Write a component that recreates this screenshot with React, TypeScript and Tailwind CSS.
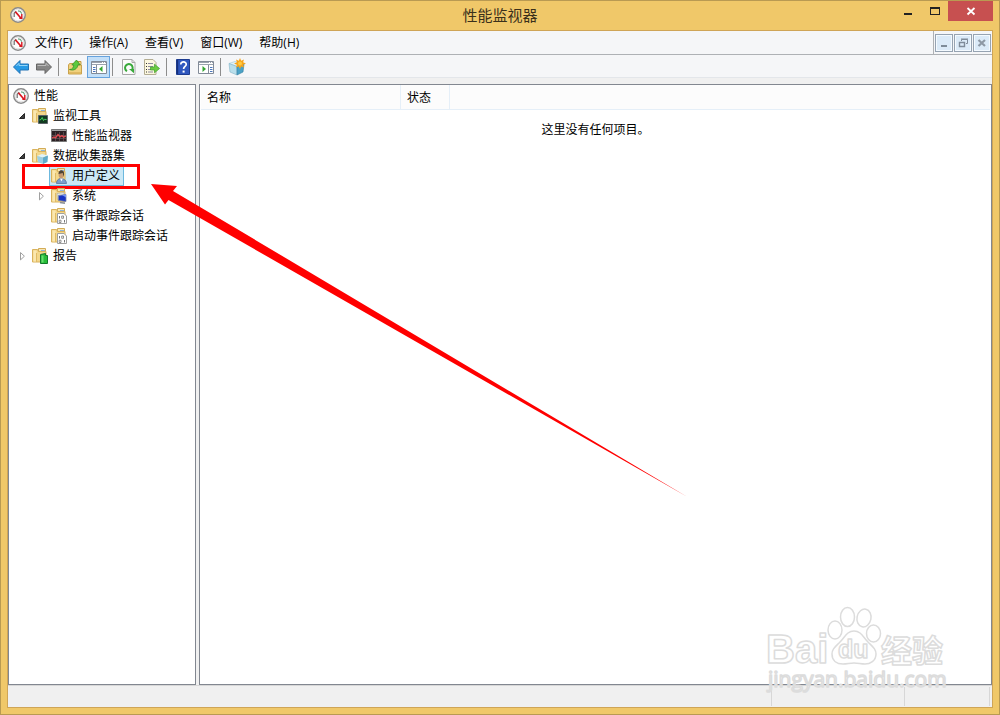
import React from "react";
import clsx from "clsx";

const GaugeIcon = () => (
  <svg width="16" height="16" viewBox="0 0 16 16" className="shrink-0">
    <circle cx="8" cy="8" r="7.2" fill="#fdfdfd" stroke="#8a8a8a" strokeWidth="1.5" />
    <circle cx="8" cy="8" r="5.9" fill="none" stroke="#d8d8d8" strokeWidth="0.8" />
    <path d="M4.2 10V6.2L6 4.2" fill="none" stroke="#777" strokeWidth="1.3" />
    <path d="M8 3.8l2.4 0.6 1.4 2.4" fill="none" stroke="#6aa584" strokeWidth="1.2" />
    <path d="M5.4 4.8l5.4 6.2" stroke="#d9141e" strokeWidth="1.7" />
    <path d="M11.8 7v4.2H9.4" fill="none" stroke="#d9141e" strokeWidth="1.4" />
  </svg>
);

const FolderIcon = ({ children }: { children?: React.ReactNode }) => (
  <svg width="16" height="16" viewBox="0 0 16 16" className="shrink-0">
    <path d="M6.5 0.5h7v4h-7z" fill="#f7e6b4" stroke="#d3ac56" />
    <path d="M9 2.5h4" stroke="#8fb4d8" />
    <path d="M0.5 1.5h5l1 2h7.5v10.5H0.5z" fill="#f3d78b" stroke="#d9b25c" />
    <path d="M1.5 2.5h3v11h-3z" fill="#fae7b0" />
    <path d="M4.5 5v9" stroke="#e0bb64" />
    {children}
  </svg>
);

const MonitorFolderIcon = () => (
  <FolderIcon>
    <path d="M6.5 7.5h9v8h-9z" fill="#123a20" stroke="#5d6468" />
    <path d="M7.500 12l1.500-0.500 1.200-2 1.300 3 1-1.200 2 0.200" fill="none" stroke="#46d65a" />
  </FolderIcon>
);

const CubeFolderIcon = () => (
  <FolderIcon>
    <path d="M5 8l5-2 6 1.5-5 2z" fill="#dff3fa" />
    <path d="M5 8l6 1.5v6.5l-5-2z" fill="#9bcfe4" />
    <path d="M11 9.500l5-2-0.500 6.500-4.500 2z" fill="#5fabcb" />
  </FolderIcon>
);

const UserFolderIcon = () => (
  <FolderIcon>
    <path d="M5.5 15.5c0-3 1.5-5 4.5-5s5.500 2 5.500 5z" fill="#7c9fcc" stroke="#4d6c98" strokeWidth="0.7" />
    <path d="M9 10.5l1.5 3 1.3-3z" fill="#fff" />
    <ellipse cx="10.2" cy="6.4" rx="2.6" ry="3.8" fill="#c79a70" />
    <path d="M7.5 6c0-5 5.8-5 5.6 0l-0.6 3-0.700-4z" fill="#4d4336" />
  </FolderIcon>
);

const SystemFolderIcon = () => (
  <FolderIcon>
    <path d="M6 5.5l7-1 0.5 8-7-1z" fill="#e7e7df" stroke="#a4a49c" strokeWidth="0.6" />
    <path d="M7.5 7.5l7.5-1v7l-7.5-1z" fill="#1733c4" stroke="#7582aa" strokeWidth="0.8" />
    <path d="M11 7l4-0.5v3z" fill="#7294f5" />
    <path d="M9 14.5l5 0.8" stroke="#8a8f97" strokeWidth="1.4" />
  </FolderIcon>
);

const TraceFolderIcon = () => (
  <FolderIcon>
    <path d="M6.5 5.5h6.500l2.500 2.500v7.500h-9z" fill="#fff" stroke="#a0a0a0" />
    <path d="M8.5 8v2.5M13.5 12v2.5" stroke="#777" />
    <path d="M10.7 8h1.800v2.300h-1.800zM8.200 12.200H10v2.300H8.200z" fill="none" stroke="#777" strokeWidth="0.8" />
  </FolderIcon>
);

const ReportFolderIcon = () => (
  <FolderIcon>
    <path d="M8.5 6.5l5-1v2h2v8h-7z" fill="#27bd38" stroke="#13792a" />
    <path d="M9.5 7.5h2v7h-2z" fill="#69df70" />
  </FolderIcon>
);

const ChartIcon = () => (
  <svg width="16" height="16" viewBox="0 0 16 16" className="shrink-0">
    <path d="M0.5 1.5h15v12h-15z" fill="#2b2124" stroke="#777" />
    <path d="M1 2.5h14" stroke="#a5a5a5" />
    <path d="M1 7.5h14M1 10.5h14M4.5 4v9M8.5 4v9M12.5 4v9" stroke="#6a585b" strokeWidth="0.7" />
    <path d="M1 10l2-1 1.5 0.8L7 6.500l2 2.300 2-1.200 1.500 1.600L15 8" fill="none" stroke="#e34a50" strokeWidth="1.3" />
  </svg>
);

const ArrowIcon = ({ forward = false }: { forward?: boolean }) => (
  <svg width="16" height="16" viewBox="0 0 16 16">
    {forward ? (
      <g>
        <path d="M15.5 8L9 1.5v3.500H0.500v6H9v3.500z" fill="#858585" stroke="#666" />
        <path d="M1.5 6.5H10V4.300l2.600 2.700" fill="none" stroke="#bcbcbc" />
      </g>
    ) : (
      <g>
        <path d="M0.5 8L7 1.500v3.500h8.500v6H7v3.500z" fill="#279ae5" stroke="#2373b4" />
        <path d="M14.5 6.5H6V4.300L3.400 7" fill="none" stroke="#92d5f8" />
      </g>
    )}
  </svg>
);

const UpFolderIcon = () => (
  <svg width="16" height="16" viewBox="0 0 16 16">
    <path d="M8.5 2.5h5.500v3H8.500z" fill="#f3d98d" stroke="#c49c45" />
    <path d="M1.5 6l1-1.500h4L8 6h6.500v9h-13z" fill="#f0d17e" stroke="#c9a24c" />
    <path d="M2 14h12" stroke="#dcb45c" strokeWidth="1.6" />
    <path
      d="M2.500 10.500c3 0 4-2 4.200-4.500H4.800L9.500 1l3.700 4.800H11c-0.600 4-4 6.400-8.500 4.700z"
      fill="#5cc93e"
      stroke="#2d8b23"
      strokeWidth="0.7"
    />
  </svg>
);

const PaneIcon = ({ mirrored = false }: { mirrored?: boolean }) => (
  <svg width="16" height="16" viewBox="0 0 16 16">
    <path d="M0.5 2.5h15v12h-15z" fill="#fff" stroke="#828b98" />
    <path d="M1 3.5h14M1 5.5h14" stroke="#9ba3af" />
    <path d="M11 3.5h1M13 3.5h1" stroke="#fff" />
    {mirrored ? (
      <g>
        <path d="M10.5 6v8" stroke="#828b98" />
        <path d="M12 8.5h2.500M12 10.500h2.500M12 12.500h2.500" stroke="#4b76bd" />
        <path d="M4.5 7v6L8 10z" fill="#35a632" />
      </g>
    ) : (
      <g>
        <path d="M5.5 6v8" stroke="#828b98" />
        <path d="M2 8.5h2.500M2 10.500h2.500M2 12.500h2.500" stroke="#4b76bd" />
        <path d="M11.5 7v6L8 10z" fill="#35a632" />
      </g>
    )}
  </svg>
);

const RefreshIcon = () => (
  <svg width="16" height="16" viewBox="0 0 16 16">
    <path d="M1.5 0.5h9.500l3 3v12h-12.500z" fill="#fbfbfb" stroke="#a8a8a8" />
    <path d="M11 0.5v3h3" fill="none" stroke="#a8a8a8" />
    <path d="M6 12.2A3.800 3.800 0 1 1 11 11" fill="none" stroke="#39a93b" strokeWidth="2" />
    <path d="M8 10h5v4.200z" fill="#39a93b" />
  </svg>
);

const ExportIcon = () => (
  <svg width="16" height="16" viewBox="0 0 16 16">
    <path d="M0.5 0.5h8.500l3 3v12H0.500z" fill="#fdf8df" stroke="#b3ad92" />
    <path d="M2 4.5h1M2 7.5h1M2 10.5h1M2 13h1" stroke="#333" />
    <path d="M4 4.5h5M4 7.5h5M4 10.5h3M4 13h5" stroke="#8d8aa0" />
    <path d="M6.5 8h4V5.200L15.600 9.500l-5.100 4.300V11h-4z" fill="#6dcc42" stroke="#3fa02e" strokeWidth="0.7" />
  </svg>
);

const HelpIcon = () => (
  <svg width="16" height="16" viewBox="0 0 16 16">
    <path d="M1.5 0.5h13v15h-13z" fill="#2f57bf" stroke="#1d3c90" />
    <path d="M2.5 1v14" stroke="#16307c" strokeWidth="1.4" />
    <path d="M5.8 5.400c0-3.400 5.600-3.200 5.400 0 0 2-2.600 2.200-2.600 4.600" fill="none" stroke="#fff" strokeWidth="1.7" />
    <path d="M7.6 11.6h2v2h-2z" fill="#fff" />
  </svg>
);

const NewSetIcon = () => (
  <svg width="18" height="18" viewBox="0 0 18 18">
    <path d="M1 5.5l6-2 8 2.500-6 2.500z" fill="#e2f2f8" stroke="#9ec4d4" strokeWidth="0.6" />
    <path d="M1 5.5l8 3v8.500l-7-3z" fill="#b8deeb" stroke="#83b3c8" strokeWidth="0.6" />
    <path d="M9 8.5L16 6l-1 8-6 3z" fill="#4ba2c6" stroke="#337e9f" strokeWidth="0.6" />
    <path
      d="M12 0l1.200 2.700L16 1.400l-0.900 2.900 2.900 1.200-2.900 1.200L16 9.600l-2.800-1.200L12 11l-1.200-2.600L8 9.600l0.900-2.900L6 5.500l2.900-1.200L8 1.400l2.800 1.300z"
      fill="#f7a51b"
    />
    <circle cx="12" cy="5.5" r="2" fill="#ffca42" />
  </svg>
);

const menus = ["文件(F)", "操作(A)", "查看(V)", "窗口(W)", "帮助(H)"];

interface Tool {
  label: string;
  icon: React.ReactNode;
  pressed?: boolean;
}

const toolGroups: Tool[][] = [
  [
    { label: "后退", icon: <ArrowIcon /> },
    { label: "前进", icon: <ArrowIcon forward /> },
  ],
  [
    { label: "上移一级", icon: <UpFolderIcon /> },
    { label: "显示/隐藏控制台树", icon: <PaneIcon />, pressed: true },
  ],
  [
    { label: "刷新", icon: <RefreshIcon /> },
    { label: "导出列表", icon: <ExportIcon /> },
  ],
  [
    { label: "帮助", icon: <HelpIcon /> },
    { label: "显示/隐藏操作窗格", icon: <PaneIcon mirrored /> },
  ],
  [{ label: "新建数据收集器集", icon: <NewSetIcon /> }],
];

interface TreeNode {
  label: string;
  level: 0 | 1 | 2;
  icon: React.ReactNode;
  state?: "open" | "closed";
  selected?: boolean;
}

const nodes: TreeNode[] = [
  { label: "性能", level: 0, icon: <GaugeIcon /> },
  { label: "监视工具", level: 1, icon: <MonitorFolderIcon />, state: "open" },
  { label: "性能监视器", level: 2, icon: <ChartIcon /> },
  { label: "数据收集器集", level: 1, icon: <CubeFolderIcon />, state: "open" },
  { label: "用户定义", level: 2, icon: <UserFolderIcon />, selected: true },
  { label: "系统", level: 2, icon: <SystemFolderIcon />, state: "closed" },
  { label: "事件跟踪会话", level: 2, icon: <TraceFolderIcon /> },
  { label: "启动事件跟踪会话", level: 2, icon: <TraceFolderIcon /> },
  { label: "报告", level: 1, icon: <ReportFolderIcon />, state: "closed" },
];

const indents = ["pl-0.5", "pl-[7px]", "pl-[26px]"];

const Expander = ({ state }: { state?: "open" | "closed" }) => (
  <span className="w-3.5 shrink-0">
    <svg width="12" height="10" viewBox="0 0 12 10">
      {state === "open" && <path d="M8.500 2.500v5h-5z" fill="#404040" stroke="#262626" />}
      {state === "closed" && <path d="M4.500 1.500v7.400L8.400 5.200z" fill="#fff" stroke="#a0a0a0" />}
    </svg>
  </span>
);

const TreeRow = ({ node }: { node: TreeNode }) => (
  <li className={clsx("relative flex h-5 items-center", indents[node.level])}>
    {node.level > 0 && <Expander state={node.state} />}
    <button
      className={clsx(
        "flex h-5 items-center gap-[5px] pr-1 pl-0.5",
        node.selected && "bg-[#cbe8f6] outline-1 -outline-offset-1 outline-[#6cb8de]"
      )}
    >
      {node.icon}
      {node.label}
    </button>
    {node.selected && (
      <span className="pointer-events-none absolute -top-0.5 left-[13px] h-[25px] w-[118px] border-3 border-[#ff0000]" />
    )}
  </li>
);

const TitleBar = () => (
  <header className="relative flex h-[29px] shrink-0 items-start justify-between">
    <div className="pt-1.5 pl-[9px]">
      <GaugeIcon />
    </div>
    <h1 className="absolute inset-x-0 top-0 text-center text-[15px] leading-7 text-[#3b301b]">性能监视器</h1>
    <div className="relative mr-1.5 flex">
      <button aria-label="最小化" className="flex h-5 w-[27px] items-center justify-center">
        <svg width="12" height="12" viewBox="0 0 12 12">
          <path d="M2 8h8v2H2z" fill="#222" />
        </svg>
      </button>
      <button aria-label="最大化" className="flex h-5 w-[27px] items-center justify-center">
        <svg width="12" height="12" viewBox="0 0 12 12">
          <path d="M1 2h10v8H1zM2 4v5h8V4z" fill="#222" fillRule="evenodd" />
        </svg>
      </button>
      <button aria-label="关闭" className="flex h-5 w-[45px] items-center justify-center bg-[#c75050]">
        <svg width="10" height="10" viewBox="0 0 10 10">
          <path d="M1.500 2l7 6.500M8.500 2l-7 6.500" stroke="#fff" strokeWidth="1.8" />
        </svg>
      </button>
    </div>
  </header>
);

const mdiIcons = [
  { label: "最小化子窗口", shape: <path d="M3 8h6v2H3z" fill="#7e8b99" /> },
  {
    label: "还原子窗口",
    shape: (
      <g fill="none" stroke="#7e8b99">
        <path d="M4.500 4V2.500h6v4H9" />
        <path d="M4 2h7" />
        <path d="M2.500 5.500h5v4h-5z" strokeWidth="1.400" />
      </g>
    ),
  },
  { label: "关闭子窗口", shape: <path d="M2.500 3l6.500 6M9 3L2.500 9" stroke="#8d98a5" strokeWidth="2.200" /> },
];

const MenuBar = () => (
  <nav className="flex h-6 shrink-0 items-stretch border-b border-[#aeb1b5] bg-[#f5f6f8]">
    <div className="flex items-center gap-px pl-0.5">
      <GaugeIcon />
      {menus.map(menu => (
        <button key={menu} className="px-2">
          {menu}
        </button>
      ))}
    </div>
    <div className="ml-auto flex items-center gap-px border-l border-[#aeb1b5] pr-px pl-px">
      {mdiIcons.map(({ label, shape }) => (
        <button
          key={label}
          aria-label={label}
          className="flex h-[18px] w-[18px] items-center justify-center border border-[#96a3b2] bg-[#dbeaf8] inset-ring inset-ring-[#f4faff]"
        >
          <svg width="12" height="12" viewBox="0 0 12 12" className="shrink-0">
            {shape}
          </svg>
        </button>
      ))}
    </div>
  </nav>
);

const Toolbar = () => (
  <div className="flex h-[23px] shrink-0 border-b border-[#e3e6ea] bg-[#f5f6f8] pt-px pl-0.5">
    {toolGroups.map((group, i) => (
      <div key={i} className="flex">
        {i > 0 && <span className="mt-0.5 mr-[5px] ml-0.5 h-[18px] w-px bg-[#8d8d8d]" />}
        {group.map(tool => (
          <button
            key={tool.label}
            aria-label={tool.label}
            className={clsx(
              "flex h-[22px] w-[23px] items-center justify-center",
              tool.pressed ? "border border-[#66a3de] bg-[#c3dff8]" : "pr-0.5"
            )}
          >
            {tool.icon}
          </button>
        ))}
      </div>
    ))}
  </div>
);

const DetailPane = () => (
  <main className="flex-1 border border-[#828790] bg-white px-px">
    <table className="w-full table-fixed border-separate border-spacing-0">
      <thead>
        <tr className="h-[25px] bg-[#fcfcfc] text-left">
          <th className="w-[200px] border-r border-b border-[#e5eff8] pt-0.5 pl-1.5 font-normal">名称</th>
          <th className="w-[49px] border-r border-b border-[#e5eff8] pt-0.5 pl-1.5 font-normal">状态</th>
          <th className="border-b border-[#e5eff8]" />
        </tr>
      </thead>
      <tbody>
        <tr>
          <td colSpan={3} className="h-10 text-center">
            这里没有任何项目。
          </td>
        </tr>
      </tbody>
    </table>
  </main>
);

const StatusBar = () => (
  <footer className="flex h-[22px] shrink-0 justify-end border-t border-[#d7d7d7] bg-[#f0f0f0] pt-px pr-0.5 pb-px">
    <span className="w-[133px] border-l border-[#d7d7d7]" />
    <span className="w-[86px] border-x border-[#d7d7d7]" />
  </footer>
);

const Watermark = () => (
  <svg width="190" height="90" viewBox="0 0 190 90" className="pointer-events-none absolute right-[49px] bottom-[19px]">
    <g fill="#fff" fillOpacity="0.85" stroke="#dcdcdc" strokeWidth="1.5" strokeLinejoin="round">
      <ellipse cx="75" cy="25" rx="7" ry="9" />
      <ellipse cx="87.5" cy="12" rx="7" ry="9.5" />
      <ellipse cx="104" cy="13" rx="7" ry="9" transform="rotate(12 104 13)" />
      <ellipse cx="113.5" cy="28.500" rx="7" ry="8.500" />
      <path d="M94 26c7 0 9 6 14 11s8 7 8 12c0 7-6 10-11 10-4 0-7-1-11-1s-7 1-11 1c-6 0-11-3-11-10 0-5 3-7 8-12s7-11 14-11z" />
      <text x="6" y="58" className="font-['Liberation_Sans'] text-[40px] font-bold">Bai</text>
      <text x="78" y="53" className="font-['Liberation_Sans'] text-[25px] font-bold">du</text>
      <text x="121" y="57" className="font-['Noto_Sans_CJK_SC'] text-[31px] font-bold">经验</text>
      <text x="8" y="82" className="font-['Open_Sans'] text-[21px]">jingyan.baidu.com</text>
    </g>
  </svg>
);

export default function App() {
  return (
    <div className="relative flex h-screen flex-col overflow-hidden border border-[#b99a52] bg-[#f0c869] font-['Open_Sans','Noto_Sans_CJK_SC',sans-serif] text-[12px] leading-5 text-black">
      <TitleBar />
      <div className="mx-1.5 mb-1.5 flex min-h-0 flex-1 flex-col border border-[#cfa557] bg-[#f0f0f0]">
        <MenuBar />
        <Toolbar />
        <div className="flex min-h-0 flex-1 gap-[3px] pt-1.5">
          <aside className="w-[188px] shrink-0 border border-[#828790] bg-white">
            <ul className="pt-px">
              {nodes.map(node => (
                <TreeRow key={node.label} node={node} />
              ))}
            </ul>
          </aside>
          <DetailPane />
        </div>
        <StatusBar />
      </div>
      <Watermark />
      <svg width="540" height="316" viewBox="0 0 540 316" className="pointer-events-none absolute top-[181px] left-[148px]">
        <path d="M2 2l26 2-4 5L538.500 315 19.500 18 16 22.500z" fill="#ff0000" />
      </svg>
    </div>
  );
}
